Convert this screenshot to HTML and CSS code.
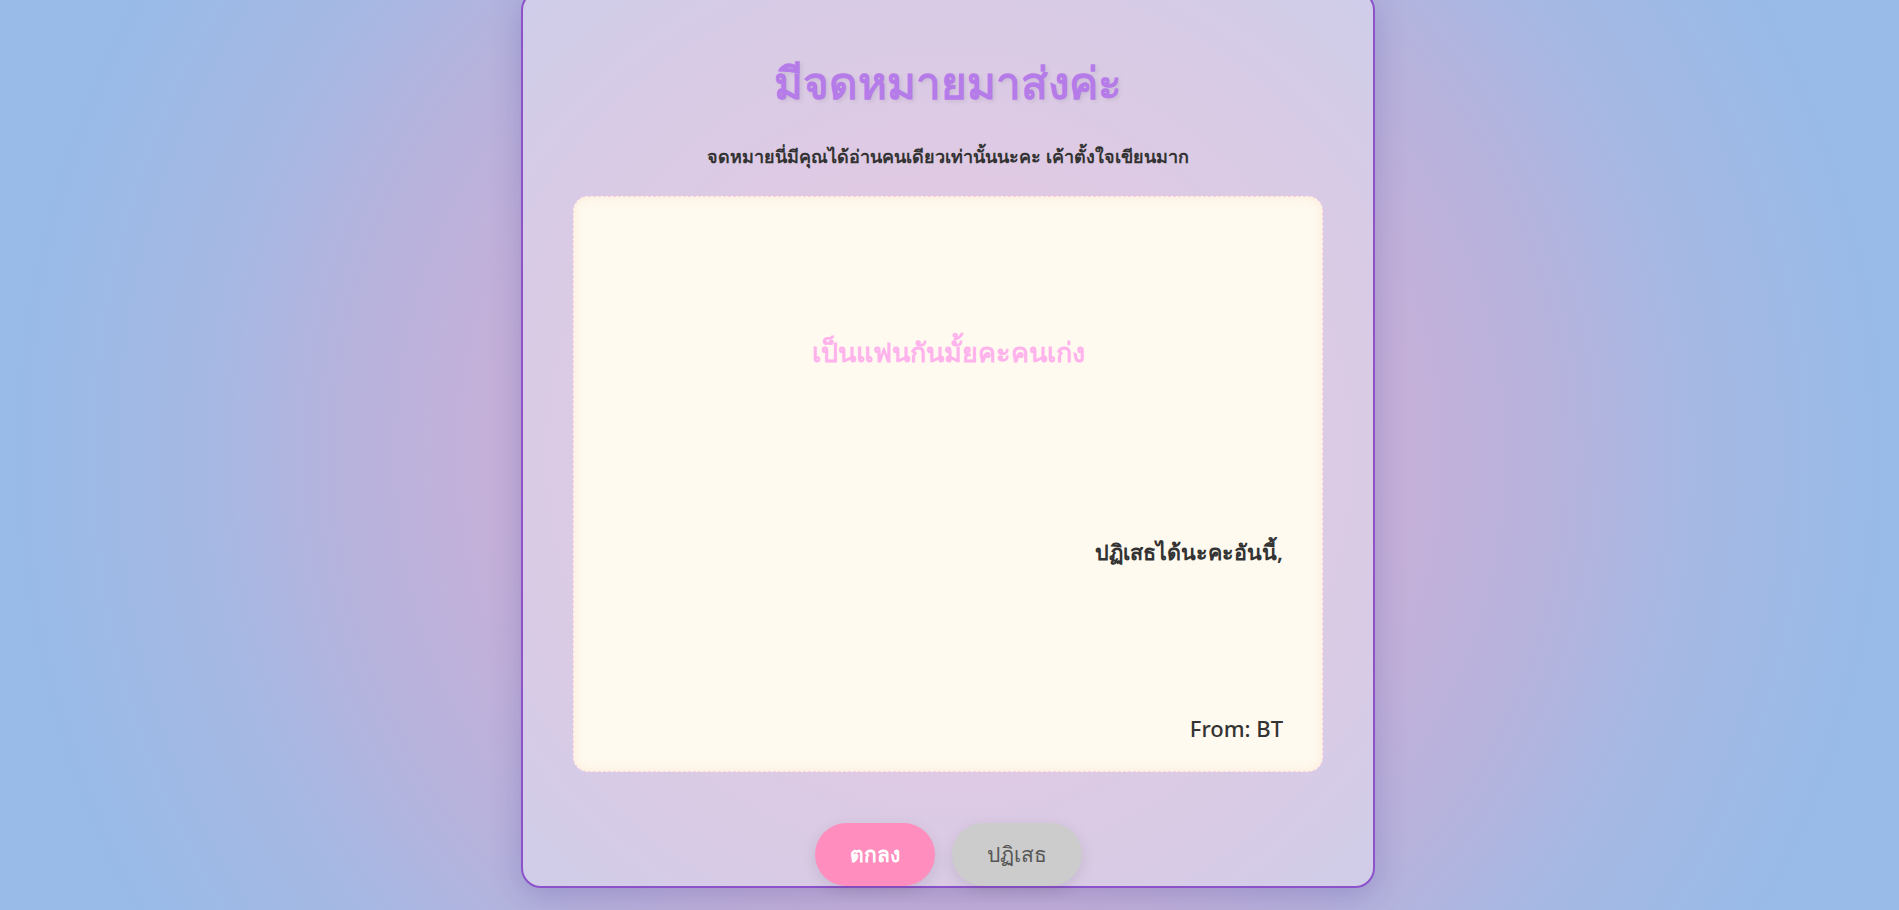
FILE: index.html
```html
<!DOCTYPE html>
<html lang="th">
<head>
<meta charset="utf-8">
<title>มีจดหมายมาส่งค่ะ</title>
<link rel="stylesheet" href="styles.css">
</head>
<body>
<main class="stage">
  <section class="card">
    <h1 class="title">มีจดหมายมาส่งค่ะ</h1>
    <p class="subtitle">จดหมายนี่มีคุณได้อ่านคนเดียวเท่านั้นนะคะ เค้าตั้งใจเขียนมาก</p>
    <div class="letter">
      <p class="question">เป็นแฟนกันมั้ยคะคนเก่ง</p>
      <p class="note">ปฏิเสธได้นะคะอันนี้,</p>
      <p class="from">From: BT</p>
    </div>
    <div class="actions">
      <button class="btn btn-yes">ตกลง</button>
      <button class="btn btn-no">ปฏิเสธ</button>
    </div>
  </section>
</main>
</body>
</html>
```

FILE: styles.css
```css
* { box-sizing: border-box; }

html, body {
  margin: 0;
  height: 100%;
}

body {
  font-family: "Noto Sans", "DejaVu Sans", sans-serif;
  color: #333;
  background: radial-gradient(circle at center, #d8aad2 0%, #cdaed6 30%, #c4b0d9 44%, #b6b3dd 58%, #a6b8e3 70%, #98bbe8 90%);
  overflow: hidden;
}

.stage {
  height: 100vh;
  display: flex;
  flex-direction: column;
  align-items: center;
  justify-content: flex-end;
  padding: 0 3px 22px 0;
}

.card {
  flex-shrink: 0;
  width: 854px;
  padding: 60px 50px 0;
  border: 2px solid #8b52c9;
  border-radius: 20px;
  background: rgba(255, 255, 255, 0.35);
  box-shadow: 0 8px 32px rgba(31, 38, 135, 0.22);
  display: flex;
  flex-direction: column;
  align-items: center;
}

.title {
  margin: 0;
  font-size: 44px;
  line-height: 60px;
  font-weight: 700;
  color: #b57be8;
  text-shadow: 2px 2px 4px rgba(0, 0, 0, 0.08);
}

.subtitle {
  margin: 32px 0 28px;
  font-size: 18px;
  line-height: 24px;
  font-weight: 600;
  color: #333;
}

.letter {
  width: 750px;
  height: 576px;
  padding: 0 39px;
  border: 1px dashed #ffcfdc;
  border-radius: 15px;
  background: #fffaf0;
  box-shadow: inset 0 0 12px rgba(230, 200, 150, 0.25);
  display: flex;
  flex-direction: column;
}

.question {
  margin: 138px 0 0;
  text-align: center;
  font-size: 27px;
  line-height: 34px;
  font-weight: 700;
  color: #ffb3ec;
}

.note {
  margin: 168px 0 0;
  text-align: right;
  font-size: 21.5px;
  line-height: 30px;
  font-weight: 600;
  color: #333;
}

.from {
  margin: auto 0 28px;
  text-align: right;
  font-size: 22px;
  line-height: 30px;
  font-weight: 500;
  color: #333;
}

.actions {
  margin-top: 51px;
  display: flex;
  gap: 17px;
}

.btn {
  height: 63px;
  padding: 0 35px;
  border: none;
  border-radius: 32px;
  font-family: inherit;
  font-size: 21px;
  font-weight: 700;
  box-shadow: 0 4px 15px rgba(0, 0, 0, 0.1);
}

.btn-yes {
  background: #ff8dbd;
  color: #fff;
}

.btn-no {
  background: #cccccc;
  color: #555;
  font-weight: 500;
}
```
